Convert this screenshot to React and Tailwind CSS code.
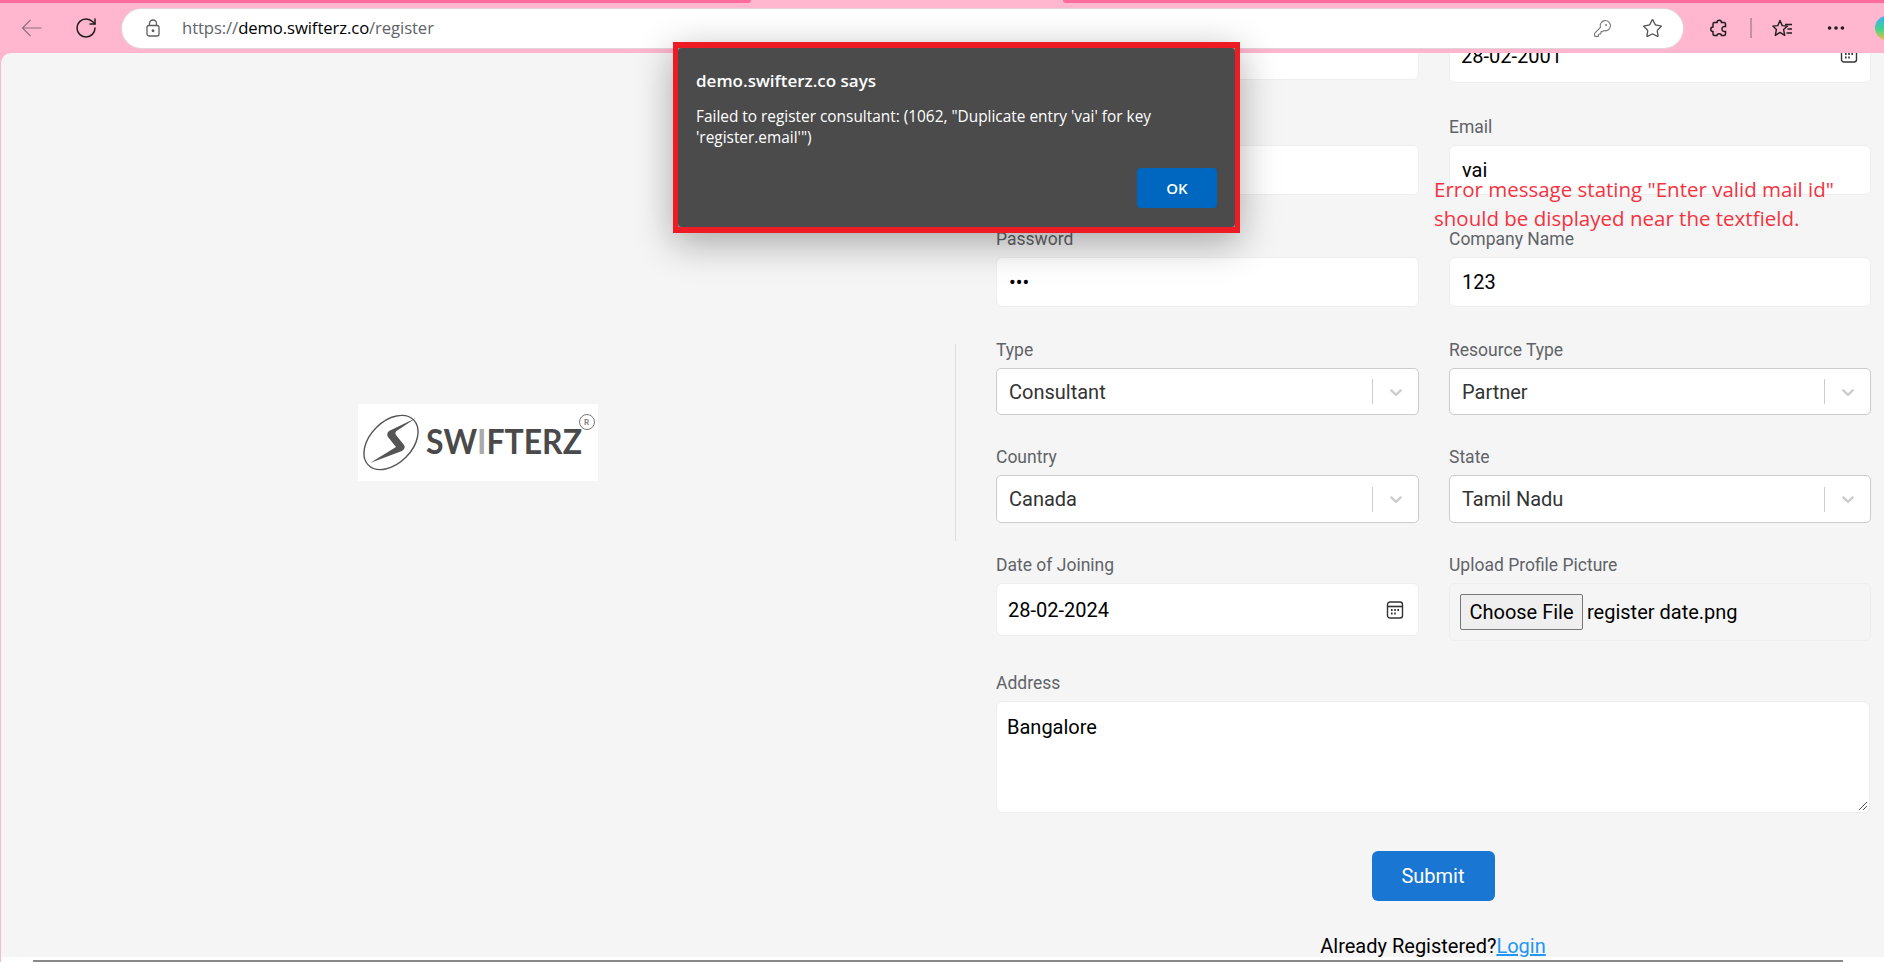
import { RotateCw, KeyRound, Star, Ellipsis } from "lucide-react";

function Label({ children }) {
  return <div className="text-[17.5px] leading-[19px] text-[#5f6368] h-[19px]">{children}</div>;
}

function TextField({ label, value, h = "h-[50px]" }) {
  return (
    <div>
      <Label>{label}</Label>
      <div className={`mt-[8px] ${h} bg-white rounded-[6px] border border-[#eeeeee] flex items-center px-[12px] text-[20px] text-black`}>
        {value}
      </div>
    </div>
  );
}

function SelectField({ label, value, h = "h-[47px]" }) {
  return (
    <div>
      <Label>{label}</Label>
      <div className={`mt-[8px] ${h} bg-white rounded-[5px] border border-[#cccccc] flex items-center pl-[12px] text-[20px] text-[#333333]`}>
        <span className="flex-1">{value}</span>
        <span className="w-px h-[25px] bg-[#cccccc]" />
        <span className="w-[45px] flex justify-center">
          <svg width="20" height="20" viewBox="0 0 20 20" className="fill-[#cccccc]">
            <path d="M4.516 7.548c0.436-0.446 1.043-0.481 1.576 0l3.908 3.747 3.908-3.747c0.533-0.481 1.141-0.446 1.574 0 0.436 0.445 0.408 1.197 0 1.615-0.406 0.418-4.695 4.502-4.695 4.502-0.217 0.223-0.502 0.335-0.787 0.335s-0.57-0.112-0.789-0.335c0 0-4.287-4.084-4.695-4.502s-0.436-1.17 0-1.615z" />
          </svg>
        </span>
      </div>
    </div>
  );
}

function CalendarIcon() {
  return (
    <svg width="18" height="18" viewBox="0 0 18 18" fill="none" stroke="#333333" className="shrink-0">
      <rect x="1.5" y="1" width="15" height="16" rx="2.5" strokeWidth="1.4" />
      <path d="M1.5 5.5h15" strokeWidth="1.6" />
      <path d="M5 9h1.6M8.2 9h1.6M11.4 9h1.6M5 12.5h1.6M8.2 12.5h1.6" strokeWidth="1.8" />
    </svg>
  );
}

function App() {
  return (
    <div className="font-['Roboto',sans-serif] w-[1884px] h-[962px] overflow-hidden relative bg-[#ffb6ce] flex flex-col">
      <div className="h-[3px] shrink-0 flex justify-between">
        <div className="w-[751px] bg-[#ff6b9d] rounded-br-[3px]" />
        <div className="w-[821px] bg-[#ff6b9d] rounded-bl-[3px]" />
      </div>
      <header className="h-[50px] shrink-0 flex items-center font-['Open_Sans',sans-serif] overflow-hidden">
        <svg width="21" height="18" viewBox="0 0 21 18" fill="none" stroke="#8a7480" strokeWidth="1.2" className="ml-[21px] shrink-0">
          <path d="M20.5 9H1.5M9.5 1L1.5 9l8 8" />
        </svg>
        <RotateCw size={24} strokeWidth={1.5} className="ml-[32px] text-[#1f1f1f] shrink-0" />
        <div className="ml-[24px] w-[1561px] h-[39px] shrink-0 bg-white rounded-full flex items-center pl-[24px] pr-[20px] shadow-[0_0_0_1px_#e4d4da]">
          <svg width="14" height="18" viewBox="0 0 14 18" fill="none" stroke="#5f5f5f" strokeWidth="1.3" className="shrink-0">
            <rect x="1" y="6.5" width="12" height="10.5" rx="2" />
            <path d="M3.5 6.5V4.5a3.5 3.5 0 0 1 7 0v2" />
            <circle cx="7" cy="11.8" r="0.8" fill="#5f5f5f" />
          </svg>
          <div className="ml-[22px] text-[16.7px] tracking-[-0.1px] text-[#5f6368]">
            https://<span className="text-black">demo.swifterz.co</span>/register
          </div>
          <div className="flex-1" />
          <KeyRound size={19} strokeWidth={1.4} className="text-[#777777] mr-[30px]" />
          <Star size={21} strokeWidth={1.5} className="text-[#555555]" />
        </div>
        <svg width="21" height="21" viewBox="0 0 21 21" fill="none" stroke="#1f1f1f" strokeWidth="1.5" className="ml-[26px] shrink-0">
          <path d="M8 4.5C8 1.5 12.5 1.5 12.5 4.5H15Q16.5 4.5 16.5 6V8.5C14 8 13 9.5 13 11C13 12.5 14 14 16.5 13.5V16Q16.5 17.5 15 17.5H12.5C12.5 15 8 15 8 17.5H5.5Q4 17.5 4 16V13.5C1 13.5 1 9 4 9V6Q4 4.5 5.5 4.5Z" />
        </svg>
        <span className="ml-[20px] w-[2px] h-[20px] bg-[#c0929f] shrink-0" />
        <svg width="21" height="19" viewBox="0 0 21 19" fill="none" stroke="#1f1f1f" strokeWidth="1.4" className="ml-[20px] shrink-0">
          <path d="M8 1.5L10.2 6.6L15.5 7.1L11.6 10.6L12.7 16.4L8 13.4L3.3 16.4L4.4 10.6L0.9 7.1L5.8 6.6Z" strokeLinejoin="round" />
          <path d="M13 5.5h7M15.5 10h4.5M14.5 14h5.5" />
        </svg>
        <Ellipsis size={22} className="ml-[32px] text-[#1f1f1f] shrink-0" />
        <div className="ml-[28px] w-[14px] h-[24px] shrink-0 rounded-l-full bg-[linear-gradient(180deg,#3fa9f5,#3fd68f_55%,#f5b942)]" />
      </header>

      <main className="flex-1 ml-[1px] bg-[#f5f5f5] rounded-tl-[10px] flex relative overflow-hidden">
        <div className="w-[954px] shrink-0 flex items-center justify-center h-[779px]">
          <svg width="240" height="77" viewBox="0 0 240 77">
            <rect width="240" height="77" fill="#ffffff" />
            <ellipse cx="33" cy="38.5" rx="32" ry="21" transform="rotate(-45 33 38.5)" fill="none" stroke="#555555" strokeWidth="1.4" />
            <path d="M58 14L31 27Q28 30 30 33L38 43L12 59L44 47Q48 44 46 41L38 31Q36 28 40 26Z" fill="#555555" />
            <text x="68" y="50" fontFamily="Lato, sans-serif" fontSize="35" fontWeight="700" fill="#4a4a4a" textLength="156" lengthAdjust="spacingAndGlyphs">
              SW<tspan fill="#aaaaaa">I</tspan>FTERZ
            </text>
            <circle cx="229" cy="18" r="7.5" fill="none" stroke="#777777" strokeWidth="1" />
            <text x="226" y="21" fontFamily="Lato, sans-serif" fontSize="8" fontWeight="700" fill="#777777">R</text>
          </svg>
        </div>
        <div className="w-px h-[197px] bg-[#dddddd] mt-[291px] shrink-0" />

        <div className="ml-[40px] w-[874px] shrink-0 -mt-[10px]">
          <div className="grid grid-cols-[423px_422px] gap-x-[30px] items-start">
            <div className="h-[37px] bg-white rounded-[6px] border border-[#eeeeee]" />
            <div className="h-[40px] bg-white rounded-[6px] border border-[#eeeeee] flex items-start justify-between pl-[11px] pr-[12px] text-[20px] text-black">
              <span className="-mt-[3px]">28-02-2001</span>
              <span className="mt-[1px]"><CalendarIcon /></span>
            </div>
          </div>
          <div className="grid grid-cols-[423px_422px] gap-x-[30px] mt-[35px]">
            <TextField label="" value="" />
            <TextField label="Email" value="vai" />
          </div>
          <div className="grid grid-cols-[423px_422px] gap-x-[30px] mt-[35px]">
            <TextField label="Password" value="•••" />
            <TextField label="Company Name" value="123" />
          </div>
          <div className="grid grid-cols-[423px_422px] gap-x-[30px] mt-[34px]">
            <SelectField label="Type" value="Consultant" />
            <SelectField label="Resource Type" value="Partner" />
          </div>
          <div className="grid grid-cols-[423px_422px] gap-x-[30px] mt-[33px]">
            <SelectField label="Country" value="Canada" h="h-[48px]" />
            <SelectField label="State" value="Tamil Nadu" h="h-[48px]" />
          </div>
          <div className="grid grid-cols-[423px_422px] gap-x-[30px] mt-[33px] items-start">
            <div>
              <Label>Date of Joining</Label>
              <div className="mt-[8px] h-[53px] bg-white rounded-[6px] border border-[#eeeeee] flex items-center justify-between pl-[11px] pr-[14px] text-[20px] text-black">
                28-02-2024
                <CalendarIcon />
              </div>
            </div>
            <div>
              <Label>Upload Profile Picture</Label>
              <div className="mt-[8px] h-[58px] rounded-[6px] border border-[#eeeeee] flex items-center pl-[10px] text-[20px] text-black">
                <span className="h-[36px] w-[123px] border border-[#767676] rounded-[2px] bg-[#efefef] flex items-center justify-center">Choose File</span>
                <span className="ml-[4px]">register date.png</span>
              </div>
            </div>
          </div>
          <div className="mt-[33px]">
            <Label>Address</Label>
            <div className="mt-[8px] h-[112px] bg-white rounded-[6px] border border-[#eeeeee] px-[10px] pt-[13px] text-[20px] leading-[24px] text-black relative">
              Bangalore
              <svg width="10" height="10" viewBox="0 0 10 10" className="absolute right-[1px] bottom-[1px]">
                <path d="M1 9L9 1M5 9L9 5" stroke="#555555" strokeWidth="1" />
              </svg>
            </div>
          </div>
          <div className="flex justify-center mt-[38px]">
            <div className="w-[123px] h-[50px] bg-[#1976d2] rounded-[6px] text-white text-[20px] flex items-center justify-center">Submit</div>
          </div>
          <div className="mt-[33px] text-center text-[20px] text-black leading-[24px]">
            Already Registered?<span className="text-[#2196f3] underline">Login</span>
          </div>
        </div>

        {/* annotation drawn over the email field */}
        <div className="absolute left-[1433px] top-[122px] font-['Open_Sans',sans-serif] text-[#f5323f] text-[20.5px] leading-[29px] whitespace-nowrap">
          <div>Error message stating "Enter valid mail id"</div>
          <div>should be displayed near the textfield.</div>
        </div>
      </main>

      <div className="h-[5px] shrink-0 ml-[1px] bg-white pt-[3px] pl-[32px] pr-[41px]">
        <div className="h-[2px] bg-[#888888]" />
      </div>

      {/* browser alert with the red annotation box */}
      <div className="absolute left-[673px] top-[42px] w-[567px] h-[191px] border-x-[5px] border-y-[6px] border-[#ed1c24] bg-[#8a8a8a] shadow-[0_10px_36px_rgba(0,0,0,0.32)] font-['Open_Sans',sans-serif]">
        <div className="w-full h-full bg-[#4b4b4b] rounded-[4px] pl-[18px] pr-[18px] pt-[22px] relative text-white">
          <div className="text-[17px] leading-[22px] font-semibold">demo.swifterz.co says</div>
          <div className="mt-[14px] text-[15.4px] leading-[21px] w-[500px]">
            Failed to register consultant: (1062, "Duplicate entry 'vai' for key 'register.email'")
          </div>
          <div className="absolute right-[18px] bottom-[19px] w-[80px] h-[40px] rounded-[4px] bg-[#0067c0] flex items-center justify-center text-[15px] font-semibold">OK</div>
        </div>
      </div>
    </div>
  );
}

export default App;
